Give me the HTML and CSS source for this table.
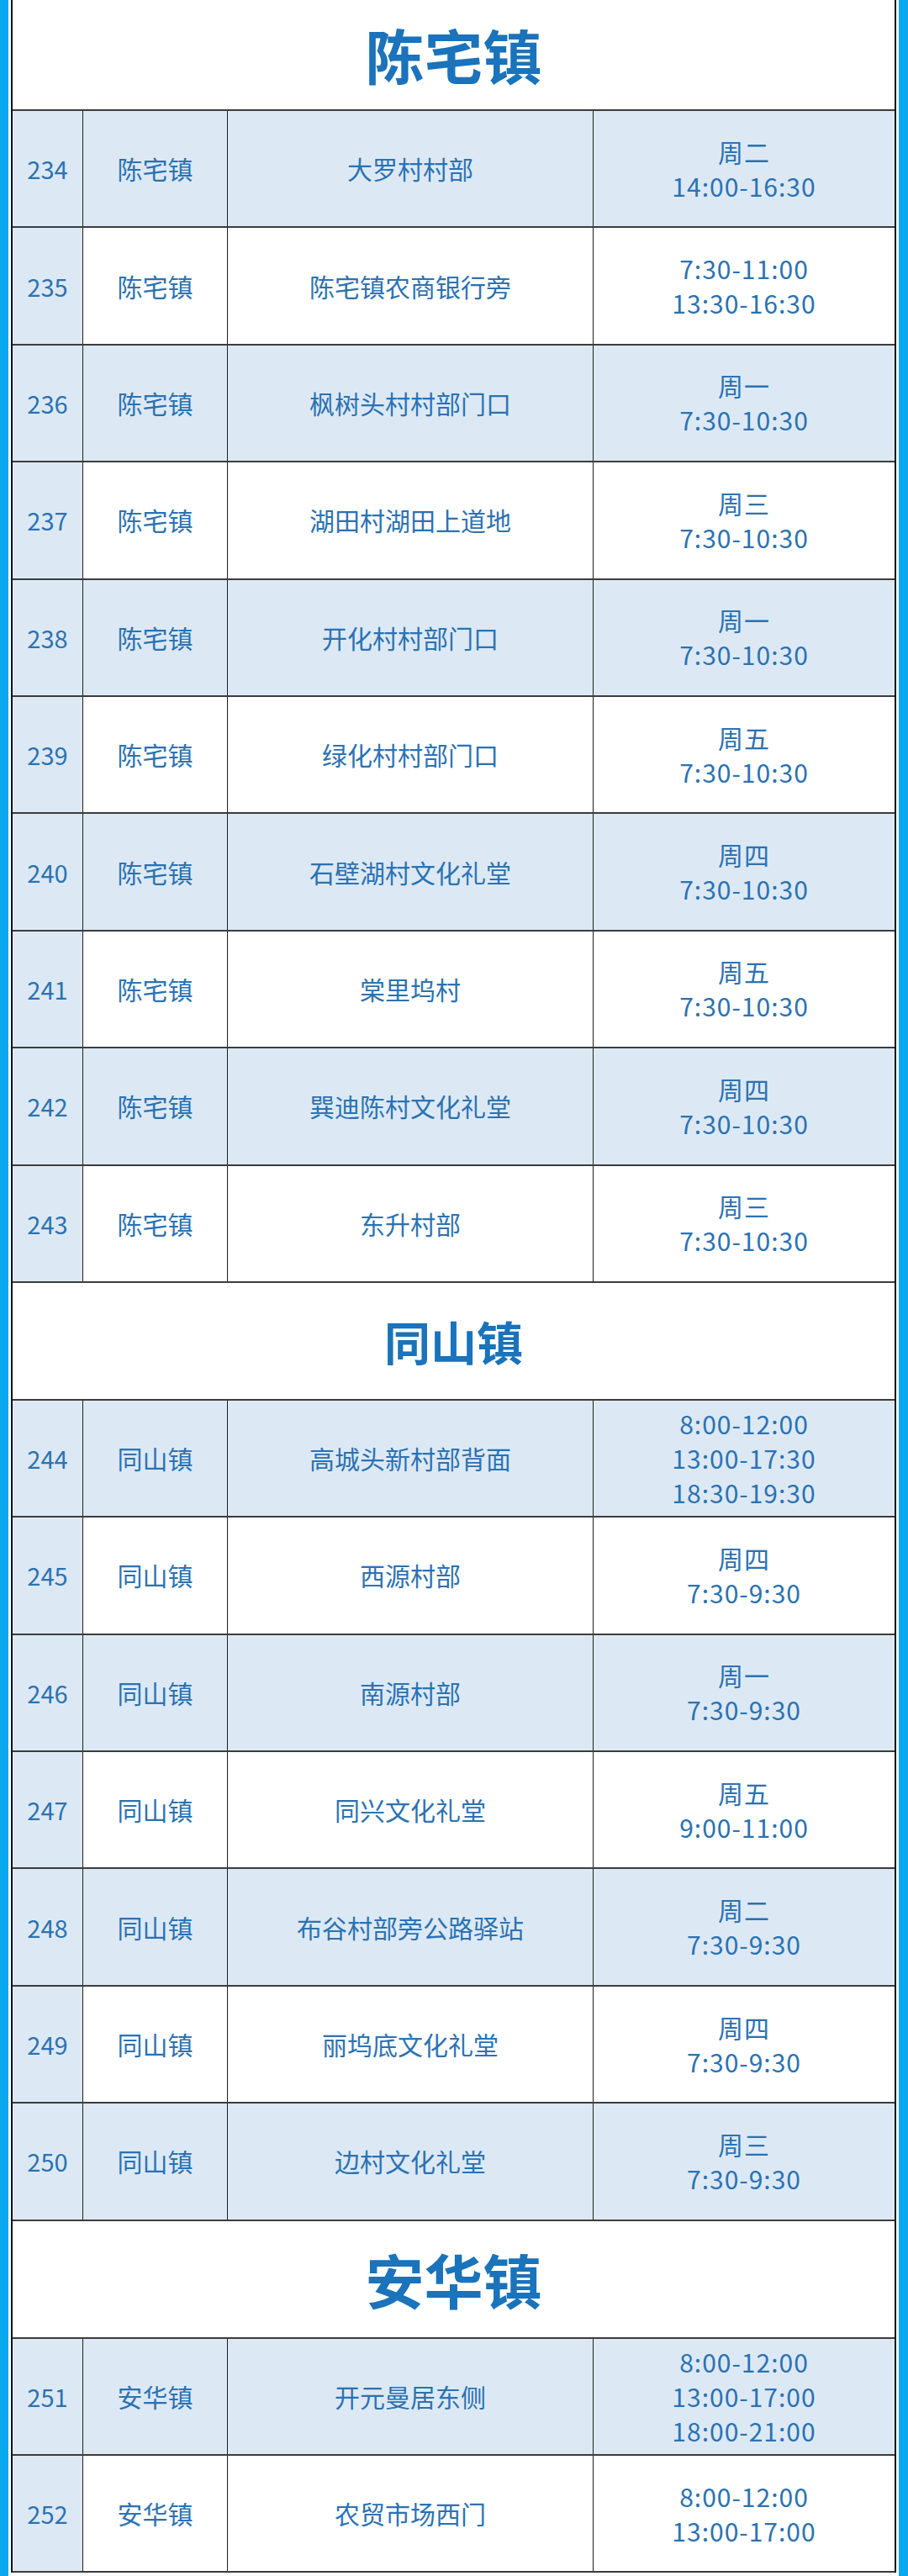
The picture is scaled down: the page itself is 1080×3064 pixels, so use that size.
FILE: index.html
```html
<!DOCTYPE html>
<html lang="zh-CN">
<head>
<meta charset="utf-8">
<title>陈宅镇 同山镇 安华镇</title>
<link rel="stylesheet" href="styles.css">
</head>
<body>
<div class="page">
  <div class="sheet">
    <div class="town town-first big">陈宅镇</div>

    <div class="row alt"><div class="c no">234</div><div class="c">陈宅镇</div><div class="c">大罗村村部</div><div class="c time">周二<br>14:00-16:30</div></div>
    <div class="row"><div class="c no">235</div><div class="c">陈宅镇</div><div class="c">陈宅镇农商银行旁</div><div class="c time">7:30-11:00<br>13:30-16:30</div></div>
    <div class="row alt"><div class="c no">236</div><div class="c">陈宅镇</div><div class="c">枫树头村村部门口</div><div class="c time">周一<br>7:30-10:30</div></div>
    <div class="row"><div class="c no">237</div><div class="c">陈宅镇</div><div class="c">湖田村湖田上道地</div><div class="c time">周三<br>7:30-10:30</div></div>
    <div class="row alt"><div class="c no">238</div><div class="c">陈宅镇</div><div class="c">开化村村部门口</div><div class="c time">周一<br>7:30-10:30</div></div>
    <div class="row"><div class="c no">239</div><div class="c">陈宅镇</div><div class="c">绿化村村部门口</div><div class="c time">周五<br>7:30-10:30</div></div>
    <div class="row alt"><div class="c no">240</div><div class="c">陈宅镇</div><div class="c">石壁湖村文化礼堂</div><div class="c time">周四<br>7:30-10:30</div></div>
    <div class="row"><div class="c no">241</div><div class="c">陈宅镇</div><div class="c">棠里坞村</div><div class="c time">周五<br>7:30-10:30</div></div>
    <div class="row alt"><div class="c no">242</div><div class="c">陈宅镇</div><div class="c">巽迪陈村文化礼堂</div><div class="c time">周四<br>7:30-10:30</div></div>
    <div class="row"><div class="c no">243</div><div class="c">陈宅镇</div><div class="c">东升村部</div><div class="c time">周三<br>7:30-10:30</div></div>

    <div class="town mid">同山镇</div>

    <div class="row alt"><div class="c no">244</div><div class="c">同山镇</div><div class="c">高城头新村部背面</div><div class="c time">8:00-12:00<br>13:00-17:30<br>18:30-19:30</div></div>
    <div class="row"><div class="c no">245</div><div class="c">同山镇</div><div class="c">西源村部</div><div class="c time">周四<br>7:30-9:30</div></div>
    <div class="row alt"><div class="c no">246</div><div class="c">同山镇</div><div class="c">南源村部</div><div class="c time">周一<br>7:30-9:30</div></div>
    <div class="row"><div class="c no">247</div><div class="c">同山镇</div><div class="c">同兴文化礼堂</div><div class="c time">周五<br>9:00-11:00</div></div>
    <div class="row alt"><div class="c no">248</div><div class="c">同山镇</div><div class="c">布谷村部旁公路驿站</div><div class="c time">周二<br>7:30-9:30</div></div>
    <div class="row"><div class="c no">249</div><div class="c">同山镇</div><div class="c">丽坞底文化礼堂</div><div class="c time">周四<br>7:30-9:30</div></div>
    <div class="row alt"><div class="c no">250</div><div class="c">同山镇</div><div class="c">边村文化礼堂</div><div class="c time">周三<br>7:30-9:30</div></div>

    <div class="town big">安华镇</div>

    <div class="row alt"><div class="c no">251</div><div class="c">安华镇</div><div class="c">开元曼居东侧</div><div class="c time">8:00-12:00<br>13:00-17:00<br>18:00-21:00</div></div>
    <div class="row"><div class="c no">252</div><div class="c">安华镇</div><div class="c">农贸市场西门</div><div class="c time">8:00-12:00<br>13:00-17:00</div></div>
  </div>
</div>
</body>
</html>
```

FILE: styles.css
```css
html, body {
  margin: 0;
  padding: 0;
  background: #ffffff;
}

body {
  font-family: "Noto Sans CJK SC", "Noto Sans", sans-serif;
  color: #2b72b3;
}

.page {
  min-height: 3064px;
  box-sizing: border-box;
  border-left: 10px solid #0aa8ef;
  border-right: 11px solid #0aa8ef;
  padding: 0 3px;
}

.sheet {
  border-left: 2px solid #111111;
  border-right: 2px solid #111111;
}

.town {
  box-sizing: border-box;
  height: 140px;
  display: flex;
  align-items: center;
  justify-content: center;
  border-bottom: 2px solid #3c3c3c;
  background: #ffffff;
  color: #1a73bb;
  font-weight: 700;
  line-height: 1;
}

.town-first {
  height: 132px;
}

.big {
  font-size: 70px;
}

.mid {
  font-size: 55px;
}

.row {
  box-sizing: border-box;
  height: 139.4px;
  display: grid;
  grid-template-columns: 84px 172px 435px 1fr;
  border-bottom: 2px solid #3c3c3c;
  background: #ffffff;
}

.row.alt {
  background: #dce9f5;
}

.c {
  display: flex;
  align-items: center;
  justify-content: center;
  text-align: center;
  font-size: 30px;
  line-height: 41px;
  border-right: 1.5px solid #1e1e1e;
  box-sizing: border-box;
}

.c:last-child {
  border-right: none;
}

.no {
  background: #dce9f5;
  font-size: 29px;
}

.time {
  line-height: 41px;
  letter-spacing: 1px;
}
```
